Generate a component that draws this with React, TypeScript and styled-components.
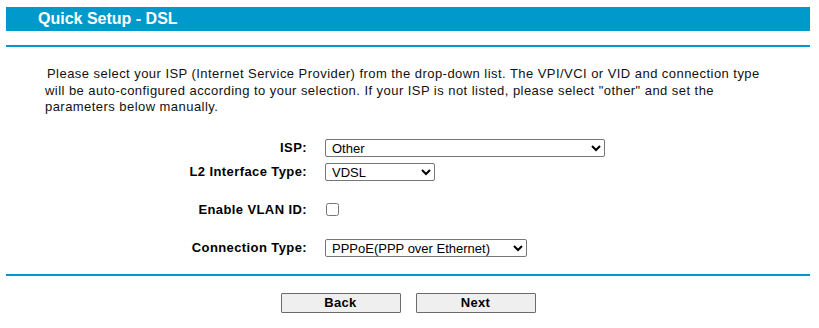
import styled, { createGlobalStyle } from "styled-components";

const GlobalStyle = createGlobalStyle`
  body {
    margin: 0;
    background: #fff;
    font-family: "Liberation Sans", Arial, sans-serif;
    color: #111;
  }
`;

const Page = styled.div`
  width: 819px;
  padding-top: 7px;
`;

const TitleBar = styled.div`
  margin: 0 9px 0 6px;
  height: 24px;
  display: flex;
  align-items: center;
  padding-left: 32px;
  background-color: #0099cc;
  color: #fff;
  font-size: 16px;
  font-weight: bold;
`;

const Divider = styled.div<{ top: number }>`
  margin: ${(props) => props.top}px 9px 0 6px;
  height: 2px;
  background-color: #0099cc;
`;

const Intro = styled.p`
  margin: 19px 0 0 45px;
  width: 725px;
  font-size: 13px;
  line-height: 16.5px;
  letter-spacing: 0.45px;
  text-indent: 2px;
  color: #111;
`;

const Form = styled.div`
  margin-top: 20px;
  display: grid;
  grid-template-columns: 301px 1fr;
  column-gap: 18px;
  padding-left: 6px;
`;

const Label = styled.div<{ tall?: boolean }>`
  height: ${(props) => (props.tall ? 52 : 24)}px;
  display: flex;
  align-items: center;
  justify-content: flex-end;
  font-size: 13px;
  font-weight: bold;
  letter-spacing: 0.4px;
  color: #000;
`;

const Field = styled.div<{ tall?: boolean }>`
  height: ${(props) => (props.tall ? 52 : 24)}px;
  display: flex;
  align-items: center;
`;

const Select = styled.select<{ w: number }>`
  width: ${(props) => props.w}px;
  height: 18px;
  font-family: "Liberation Sans", Arial, sans-serif;
  font-size: 13px;
  color: #000;
  border: 1px solid #767676;
  border-radius: 2px;
  background: #fff;
  padding: 0 0 0 2px;
`;

const Check = styled.input`
  width: 13px;
  height: 13px;
  margin: 0 0 0 1px;
`;

const Buttons = styled.div`
  margin-top: 17px;
  display: flex;
  justify-content: center;
  gap: 15px;
  padding-right: 3px;
`;

const Button = styled.button`
  width: 120px;
  height: 20px;
  padding: 0;
  background: #efefef;
  border: 1px solid #6b6b6b;
  border-radius: 1px;
  font-family: "Liberation Sans", Arial, sans-serif;
  font-size: 13px;
  font-weight: bold;
  letter-spacing: 0.3px;
  color: #000;
`;

export default function App() {
  return (
    <>
      <GlobalStyle />
      <Page>
        <TitleBar>Quick Setup - DSL</TitleBar>
        <Divider top={14} />
        <Intro>
          Please select your ISP (Internet Service Provider) from the drop-down
          list. The VPI/VCI or VID and connection type will be auto-configured
          according to your selection. If your ISP is not listed, please select
          "other" and set the parameters below manually.
        </Intro>
        <Form>
          <Label>ISP:</Label>
          <Field>
            <Select w={280} defaultValue="other">
              <option value="other">Other</option>
            </Select>
          </Field>
          <Label>L2 Interface Type:</Label>
          <Field>
            <Select w={110} defaultValue="vdsl">
              <option value="adsl">ADSL</option>
              <option value="vdsl">VDSL</option>
            </Select>
          </Field>
          <Label tall>Enable VLAN ID:</Label>
          <Field tall>
            <Check type="checkbox" />
          </Field>
          <Label>Connection Type:</Label>
          <Field>
            <Select w={202} defaultValue="pppoe">
              <option value="pppoe">PPPoE(PPP over Ethernet)</option>
            </Select>
          </Field>
        </Form>
        <Divider top={14} />
        <Buttons>
          <Button>Back</Button>
          <Button>Next</Button>
        </Buttons>
      </Page>
    </>
  );
}
